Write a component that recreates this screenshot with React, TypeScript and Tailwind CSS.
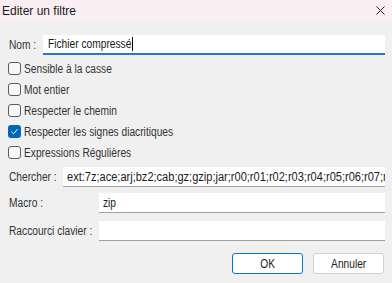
import React from 'react'

// the dialog font is narrower than anything installed, so text runs are squeezed horizontally
function T({ children, center, wide }: { children: React.ReactNode; center?: boolean; wide?: boolean }) {
  return (
    <span className={`inline-block whitespace-nowrap ${wide ? 'scale-x-[0.92]' : 'scale-x-[0.85]'} ${center ? 'origin-center' : 'origin-left'}`}>
      {children}
    </span>
  )
}

type CheckProps = {
  label: string
  checked?: boolean
}

function CheckRow({ label, checked }: CheckProps) {
  return (
    <div className="h-[21px] flex items-center">
      {checked ? (
        <div className="w-[13px] h-[13px] shrink-0 rounded-[3px] bg-[#0067c0] flex items-center justify-center">
          <svg width="9" height="9" viewBox="0 0 9 9">
            <path d="M1.5 4.8 L3.5 6.7 L7.5 2.3" stroke="white" strokeWidth="1" fill="none" />
          </svg>
        </div>
      ) : (
        <div className="w-[13px] h-[13px] shrink-0 rounded-[3px] border border-[#5c5c5c] bg-[#f7f7f7]" />
      )}
      <span className="ml-[3px] text-[#333333]"><T>{label}</T></span>
    </div>
  )
}

const searchText = 'ext:7z;ace;arj;bz2;cab;gz;gzip;jar;r00;r01;r02;r03;r04;r05;r06;r07;r08;r09;r10;rar;tar;tbz;tbz2;tgz;uu;xxe;z;zip'

export default function App() {
  return (
    <div className="w-[392px] h-[283px] bg-[#f0f0f0] text-[12px] leading-none overflow-hidden" style={{ fontFamily: '"Liberation Sans", Arial, sans-serif' }}>
      <div className="h-[21px] bg-[#f9eef2] flex items-center justify-between pl-[2px] pr-[7px]">
        <span className="text-[#1a1a1a]">Editer un filtre</span>
        <svg width="9" height="9" viewBox="0 0 9 9">
          <path d="M0.5 0.5 L8.5 8.5 M8.5 0.5 L0.5 8.5" stroke="#222" strokeWidth="1" />
        </svg>
      </div>

      <div className="pl-[8px] pr-[7px]">
        <div className="mt-[14px] flex items-center">
          <span className="w-[35px] shrink-0 pl-[1px] text-[#333333]"><T>Nom :</T></span>
          <div className="flex-1 h-[20px] bg-white border-b-2 border-[#1f7bd4] flex items-center pl-[5px]">
            <span className="text-[#1a1a1a]"><T>Fichier compressé</T></span>
            <span className="w-px h-[14px] bg-black -ml-[14px]" />
          </div>
        </div>

        <div className="mt-[3px]">
          <CheckRow label="Sensible à la casse" />
          <CheckRow label="Mot entier" />
          <CheckRow label="Respecter le chemin" />
          <CheckRow label="Respecter les signes diacritiques" checked />
          <CheckRow label="Expressions Régulières" />
        </div>

        <div className="mt-[4px] flex items-center">
          <span className="w-[55px] shrink-0 pl-[1px] text-[#333333]"><T>Chercher :</T></span>
          <div className="flex-1 min-w-0 h-[20px] bg-white border-b border-[#a0a0a0] flex items-center pl-[4px] overflow-hidden">
            <span className="text-[#1a1a1a]"><T wide>{searchText}</T></span>
          </div>
        </div>

        <div className="mt-[6px] flex items-center">
          <span className="w-[91px] shrink-0 pl-[1px] text-[#333333]"><T>Macro :</T></span>
          <div className="flex-1 h-[20px] bg-white border-b border-[#a0a0a0] flex items-center pl-[4px]">
            <span className="text-[#1a1a1a]"><T>zip</T></span>
          </div>
        </div>

        <div className="mt-[8px] flex items-center">
          <span className="w-[91px] shrink-0 pl-[1px] text-[#333333]"><T>Raccourci clavier :</T></span>
          <div className="flex-1 h-[20px] bg-white border-b border-[#a0a0a0]" />
        </div>

        <div className="mt-[12px] flex justify-end gap-[10px] pr-[1px]">
          <button className="w-[71px] h-[21px] bg-white border border-[#0078d4] rounded-[3px] text-[#1a1a1a]"><T center>OK</T></button>
          <button className="w-[71px] h-[21px] bg-white border border-[#d0d0d0] rounded-[3px] text-[#1a1a1a]"><T center>Annuler</T></button>
        </div>
      </div>
    </div>
  )
}
